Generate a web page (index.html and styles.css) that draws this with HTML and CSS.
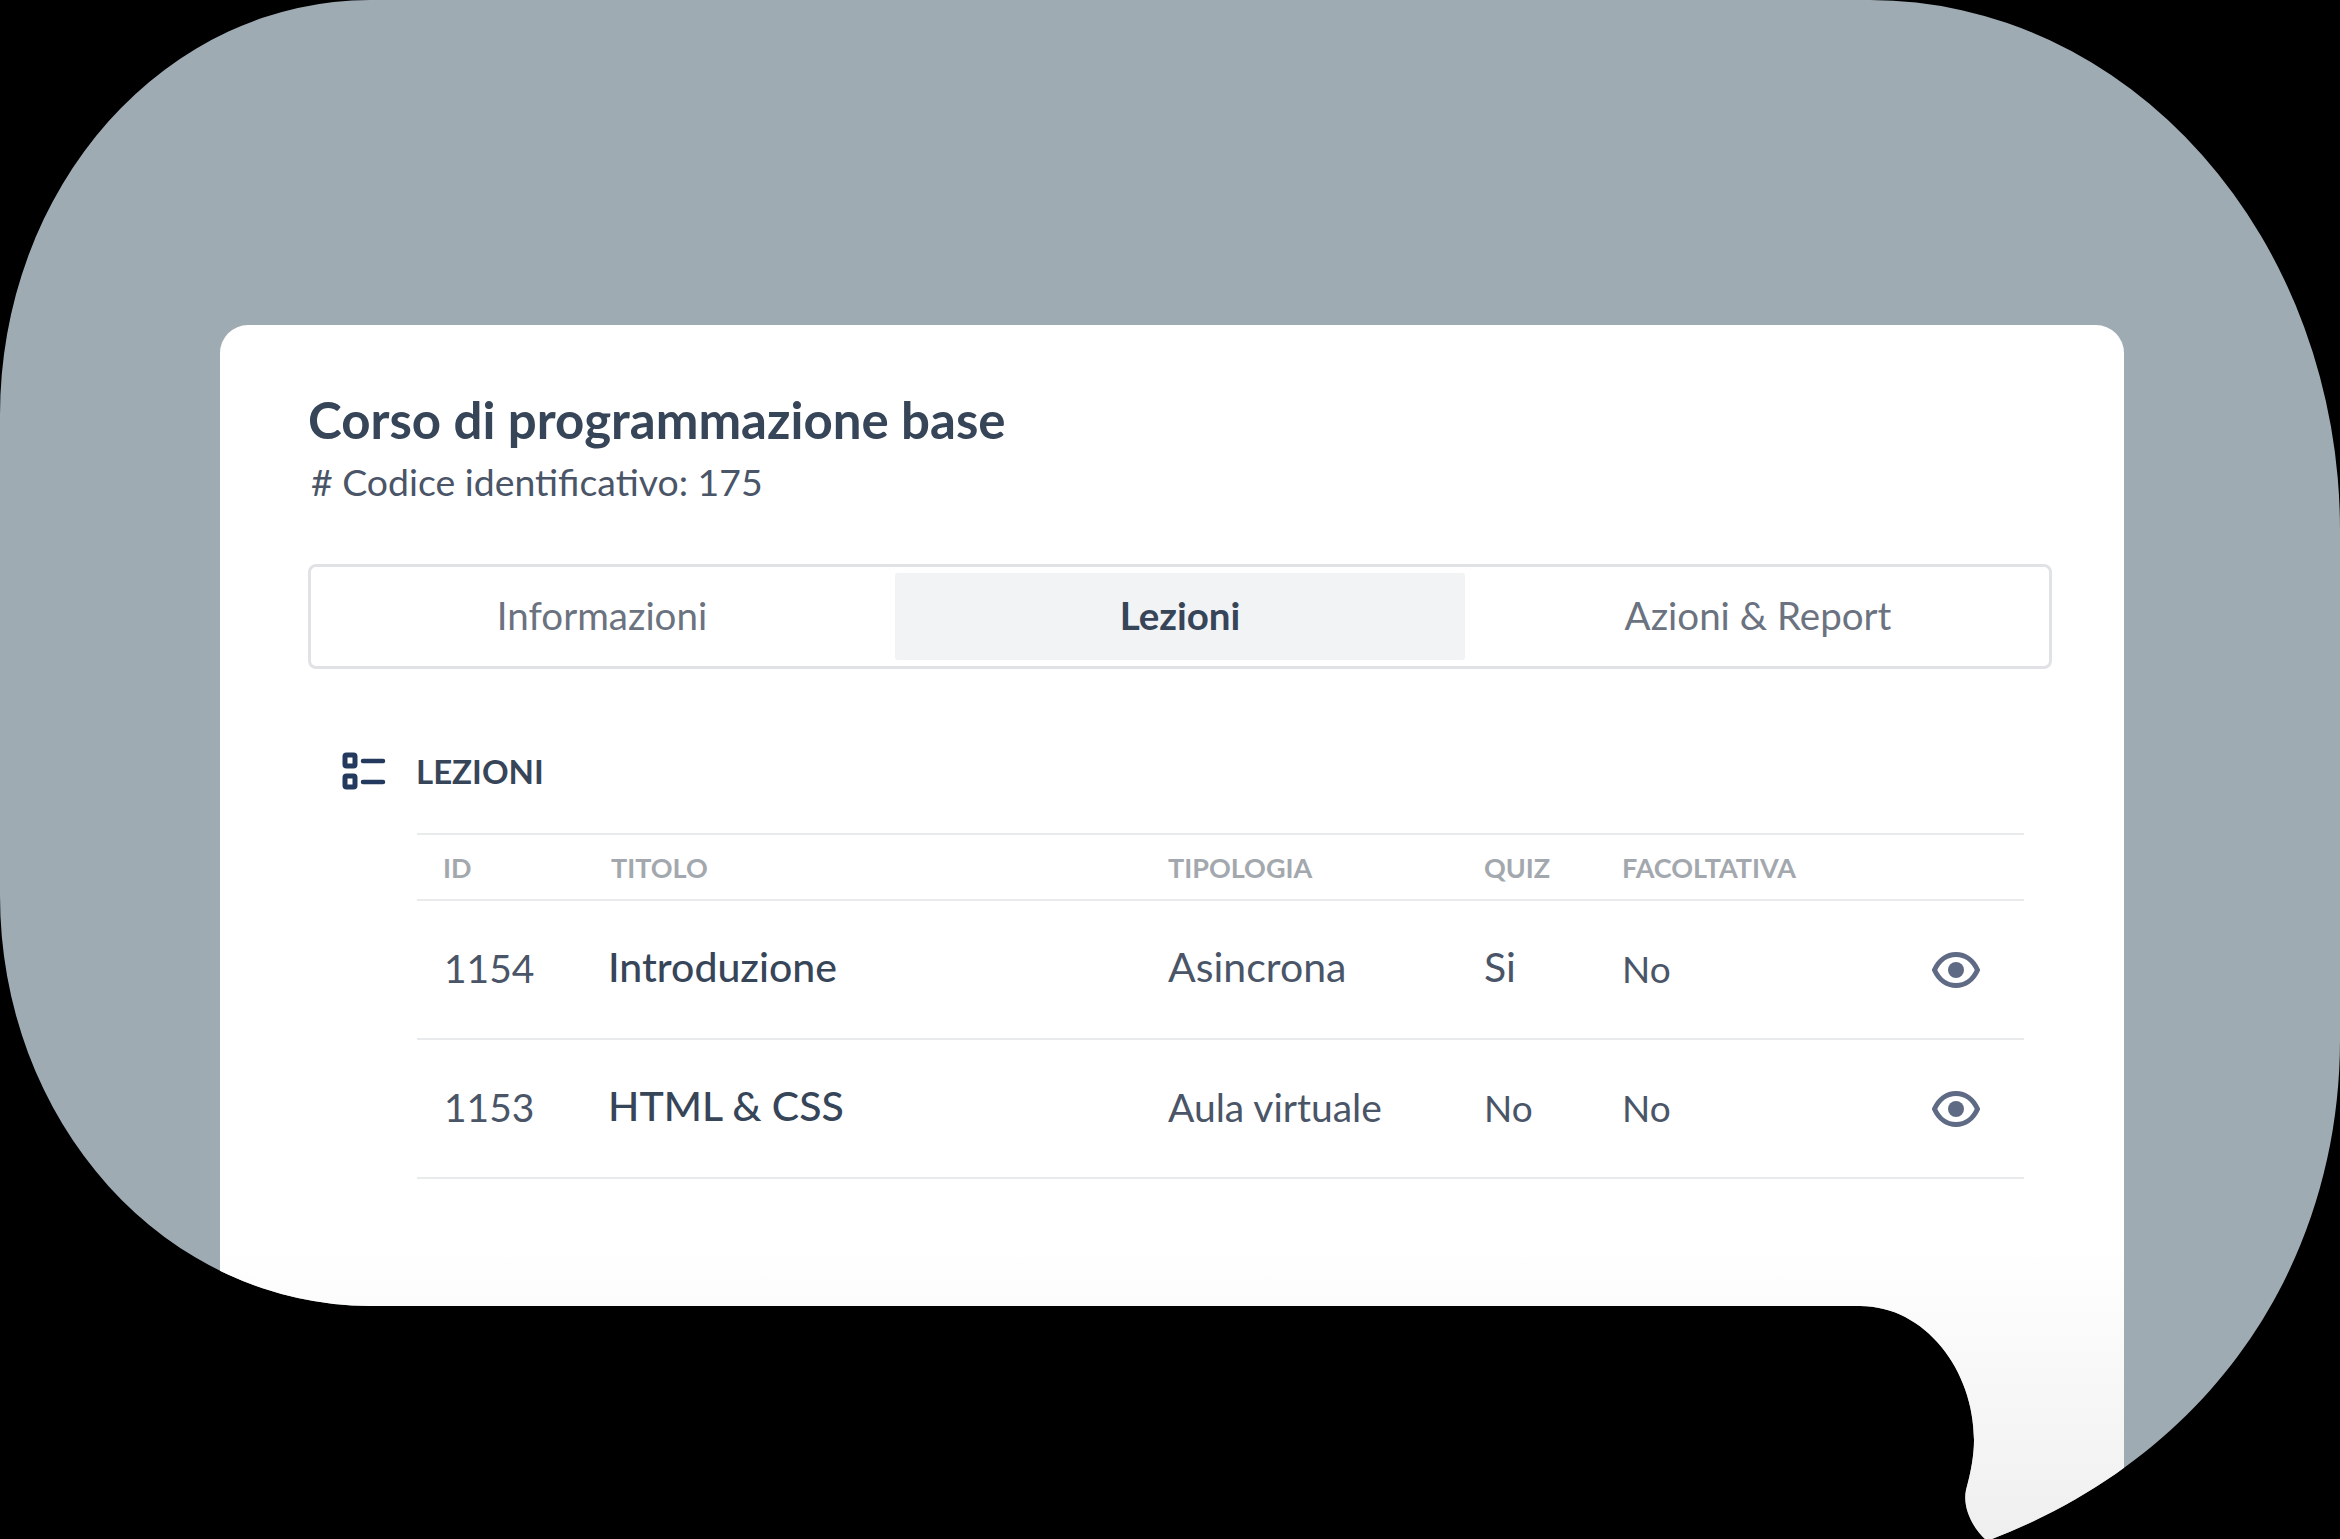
FILE: index.html
```html
<!DOCTYPE html>
<html lang="it">
<head>
<meta charset="utf-8">
<title>Corso di programmazione base</title>
<link rel="stylesheet" href="styles.css">
</head>
<body>
<main class="stage">
  <section class="card">
    <h1 class="title">Corso di programmazione base</h1>
    <p class="code"># Codice identificativo: 175</p>
    <nav class="tabs">
      <div class="tab">Informazioni</div>
      <div class="tab tab-active">Lezioni</div>
      <div class="tab">Azioni &amp; Report</div>
    </nav>
    <div class="section-head">
      <svg class="list-icon" width="44" height="38" viewBox="0 0 44 38" fill="none" stroke="#233a5e" stroke-width="5">
        <rect x="3" y="3" width="10" height="11" rx="1.500"/>
        <rect x="3" y="24" width="10" height="11" rx="1.500"/>
        <path d="M21 9h20M21 30h20" stroke-linecap="round" stroke-width="4.500"/>
      </svg>
      <h2 class="section-title">LEZIONI</h2>
    </div>
    <div class="table">
      <div class="row row-head">
        <span>ID</span><span>TITOLO</span><span>TIPOLOGIA</span><span>QUIZ</span><span>FACOLTATIVA</span><span></span>
      </div>
      <div class="row row-body">
        <span class="cell-id">1154</span>
        <span class="cell-name">Introduzione</span>
        <span class="cell-large">Asincrona</span>
        <span class="cell-large">Si</span>
        <span class="cell">No</span>
        <svg class="eye" width="48" height="36" viewBox="0 0 48 36"><path d="M2.500 18C7 8 15 2.500 24 2.500S41 8 45.500 18C41 28 33 33.500 24 33.500S7 28 2.500 18Z" fill="none" stroke="#5f6b85" stroke-width="5"/><circle cx="24" cy="18" r="8" fill="#5f6b85"/></svg>
      </div>
      <div class="row row-body">
        <span class="cell-id">1153</span>
        <span class="cell-name">HTML &amp; CSS</span>
        <span class="cell cell-wide">Aula virtuale</span>
        <span class="cell">No</span>
        <span class="cell">No</span>
        <svg class="eye" width="48" height="36" viewBox="0 0 48 36"><path d="M2.500 18C7 8 15 2.500 24 2.500S41 8 45.500 18C41 28 33 33.500 24 33.500S7 28 2.500 18Z" fill="none" stroke="#5f6b85" stroke-width="5"/><circle cx="24" cy="18" r="8" fill="#5f6b85"/></svg>
      </div>
    </div>
  </section>
</main>
</body>
</html>
```
FILE: styles.css
```css
* { box-sizing: border-box; }
html, body { margin: 0; background: #000; }
body { font-family: "Lato", "Open Sans", sans-serif; color: #374559; }
.stage {
  width: 2340px;
  height: 1539px;
  padding: 325px 216px 0 220px;
  overflow: hidden;
  background: #9eabb3;
  clip-path: path("M370 0 H1870 A470 530 0 0 1 2340 530 V1040 C2340 1250 2224 1449 1992 1539 H1985 C1975 1530 1962 1510 1966 1490 C1971 1472 1974 1455 1974 1440 C1974 1370 1925 1306 1860 1306 H370 A370 410 0 0 1 0 896 V415 A370 415 0 0 1 370 0 Z");
}
.card {
  height: 1214px;
  padding: 68px 72px 0 88px;
  border-radius: 28px 28px 0 0;
  background: linear-gradient(#fff 0, #fff 920px, #efefef 100%);
}
.title { margin: 0; font-size: 51px; line-height: 54px; font-weight: 700; color: #374559; }
.code { margin: 12px 0 0 3px; font-size: 37.400px; line-height: 46px; color: #4a5568; }
.tabs {
  display: grid;
  grid-template-columns: repeat(3, 1fr);
  gap: 8px;
  height: 105px;
  margin-top: 59px;
  padding: 6px;
  border: 3px solid #e0e2e5;
  border-radius: 8px;
}
.tab {
  display: flex;
  align-items: center;
  justify-content: center;
  padding-bottom: 3px;
  font-size: 38.500px;
  color: #6b7280;
}
.tab-active { background: #f1f3f4; color: #374559; font-weight: 700; border-radius: 3px; }
.section-head { display: flex; align-items: center; gap: 30px; margin: 82px 0 0 34px; }
.section-title { margin: 0; font-size: 33px; line-height: 40px; font-weight: 700; color: #374559; }
.table { margin: 42px 28px 0 109px; border-top: 2px solid #e8eaec; }
.row {
  display: grid;
  grid-template-columns: 168px 557px 316px 138px 1fr 48px;
  align-items: center;
  padding: 0 44px 0 26px;
  border-bottom: 2px solid #e8eaec;
}
.row-head { height: 66px; font-size: 27px; font-weight: 700; color: #a3a8ae; }
.row-body { height: 139px; }
.cell-id { margin: -3px 0 0 1px; font-size: 39px; color: #4a5568; }
.cell-name { margin-top: -6px; margin-left: -3px; font-size: 41px; font-weight: 500; color: #374559; }
.cell-large { margin-top: -6px; font-size: 41px; color: #4a5568; }
.cell { margin-top: -3px; font-size: 37px; color: #4a5568; }
.cell-wide { font-size: 39px; }
.eye { display: block; }
```
